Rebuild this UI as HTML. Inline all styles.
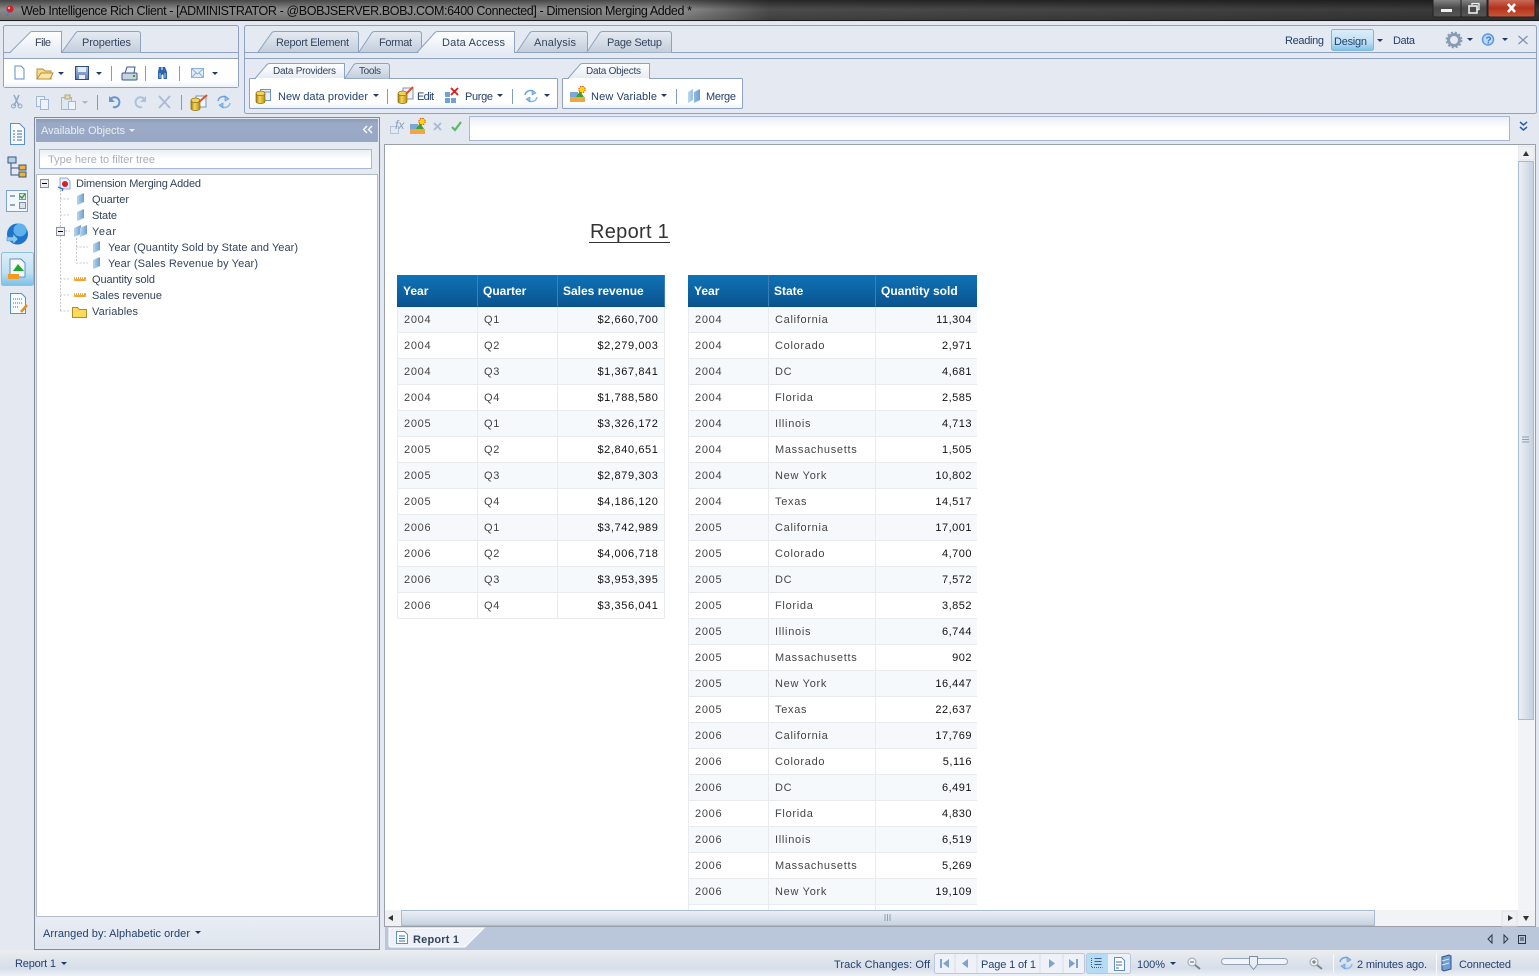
<!DOCTYPE html>
<html><head><meta charset="utf-8"><title>Web Intelligence Rich Client</title>
<style>
html,body{margin:0;padding:0;width:1539px;height:976px;overflow:hidden;background:#e3e8f1;font-family:"Liberation Sans",sans-serif}
svg{position:absolute;left:0;top:0}
svg text{font-family:"Liberation Sans",sans-serif;font-size:11px;fill:#24406e}
.tb{fill:#33445c!important}.sm{font-size:10px!important}
#w{position:absolute;left:385px;top:145px;width:1133px;height:765px;overflow:hidden;background:#fff}
#ttl{position:absolute;left:204px;top:78px;font-size:20px;line-height:19px;letter-spacing:.3px;color:#333;border-bottom:1px solid #333;padding:0 1px;white-space:nowrap}
table{position:absolute;top:130px;border-collapse:separate;border-spacing:0;table-layout:fixed;font-size:11px;color:#444}
th{height:32px;box-sizing:border-box;padding:0 0 0 5px;text-align:left;color:#fff;font-size:12px;background:linear-gradient(#0f72b7,#0a5590);border-right:1px solid #3a7fb5;border-bottom:1px solid #0a4d84;font-weight:bold}
th:first-child{padding-left:6px}
td{height:26px;box-sizing:border-box;padding:0 0 0 6px;border-right:1px solid #e9ecef;border-bottom:1px solid #e9ecef;letter-spacing:.7px;white-space:nowrap}
td:first-child{border-left:1px solid #e9ecef;padding-left:6px}
tr:nth-child(even) td{background:#f6f9fb}
td.r{text-align:right;padding:0 5.5px 0 0;color:#111}
#a td.r{letter-spacing:.6px}#b td.r{letter-spacing:.5px;border-right:0;padding-right:5px}#b th:last-child{border-right:0}
</style></head><body>
<svg width="1539" height="976" viewBox="0 0 1539 976">
<defs>
<linearGradient id="tbar" x1="0" x2="1" y1="0" y2="0"><stop offset="0" stop-color="#8a8a8a"/><stop offset=".44" stop-color="#8e8e8e"/><stop offset=".5" stop-color="#4c4c4c"/><stop offset="1" stop-color="#383838"/></linearGradient>
<linearGradient id="tv" x1="0" x2="0" y1="0" y2="1"><stop offset="0" stop-color="#000" stop-opacity=".5"/><stop offset=".45" stop-color="#000" stop-opacity="0"/><stop offset="1" stop-color="#000" stop-opacity=".2"/></linearGradient>
<linearGradient id="act" x1="0" x2="0" y1="0" y2="1"><stop offset="0" stop-color="#fff"/><stop offset="1" stop-color="#e6ecf4"/></linearGradient>
<linearGradient id="ina" x1="0" x2="0" y1="0" y2="1"><stop offset="0" stop-color="#e6ebf2"/><stop offset="1" stop-color="#c3cedc"/></linearGradient>
<linearGradient id="wh" x1="0" x2="0" y1="0" y2="1"><stop offset="0" stop-color="#fff"/><stop offset=".8" stop-color="#fff"/><stop offset="1" stop-color="#edf1f7"/></linearGradient>
<linearGradient id="sel" x1="0" x2="0" y1="0" y2="1"><stop offset="0" stop-color="#dceefa"/><stop offset=".6" stop-color="#bfe0f3"/><stop offset="1" stop-color="#7cc0e6"/></linearGradient>
<linearGradient id="hd" x1="0" x2="0" y1="0" y2="1"><stop offset="0" stop-color="#8a9ab8"/><stop offset=".2" stop-color="#9aaac6"/><stop offset="1" stop-color="#98a8c4"/></linearGradient>
<linearGradient id="inp" x1="0" x2="0" y1="0" y2="1"><stop offset="0" stop-color="#e8edf4"/><stop offset=".5" stop-color="#fff"/></linearGradient>
<linearGradient id="st" x1="0" x2="0" y1="0" y2="1"><stop offset="0" stop-color="#ebedf0"/><stop offset=".7" stop-color="#d6dee9"/><stop offset="1" stop-color="#eef1f6"/></linearGradient>
<linearGradient id="ft" x1="0" x2="0" y1="0" y2="1"><stop offset="0" stop-color="#e9edf4"/><stop offset="1" stop-color="#dfe5ef"/></linearGradient>
<linearGradient id="hs" x1="0" x2="0" y1="0" y2="1"><stop offset="0" stop-color="#eef1f6"/><stop offset="1" stop-color="#c4d0e0"/></linearGradient>
<linearGradient id="vs" x1="0" x2="1" y1="0" y2="0"><stop offset="0" stop-color="#eef1f6"/><stop offset="1" stop-color="#c4d0e0"/></linearGradient>
<linearGradient id="cl" x1="0" x2="0" y1="0" y2="1"><stop offset="0" stop-color="#c9705e"/><stop offset=".5" stop-color="#b5321c"/><stop offset="1" stop-color="#c85a3a"/></linearGradient>
<linearGradient id="gb" x1="0" x2="0" y1="0" y2="1"><stop offset="0" stop-color="#8a8a8a"/><stop offset=".5" stop-color="#4a4a4a"/><stop offset="1" stop-color="#555"/></linearGradient>
<linearGradient id="cyl" x1="0" x2="1" y1="0" y2="0"><stop offset="0" stop-color="#a07a10"/><stop offset=".4" stop-color="#f5d75a"/><stop offset="1" stop-color="#b88d14"/></linearGradient>
<linearGradient id="obj" x1="0" x2="1" y1="0" y2="0"><stop offset="0" stop-color="#bcd6ee"/><stop offset="1" stop-color="#6a9fd2"/></linearGradient>
<linearGradient id="sv" x1="0" x2="0" y1="0" y2="1"><stop offset="0" stop-color="#a9bfe0"/><stop offset="1" stop-color="#5f7fb5"/></linearGradient>
<g id="dr"><path d="M0 0h6l-3 3z" fill="#1f3a66"/></g>
<g id="ob"><path d="M0 3l7-3v9l-7 3z" fill="url(#obj)"/></g>
<g id="ms"><rect y="1" width="12" height="4" fill="#f3a73c"/><path d="M1.500 1v2M3.500 1v2M5.500 1v2M7.500 1v2M9.500 1v2" stroke="#fff" stroke-width="1"/></g>
<g id="cy"><ellipse cx="4.500" cy="2.500" rx="4.500" ry="2.500" fill="#f2d257" stroke="#8d6c10" stroke-width=".7"/><path d="M0 2.500v8c0 2.800 9 2.800 9 0v-8c0 2.800-9 2.800-9 0z" fill="url(#cyl)" stroke="#8d6c10" stroke-width=".7"/></g>
<g id="rf" fill="none" stroke-width="1.500"><path d="M1 6a5.500 5.500 0 0 1 10-2" stroke="#6ba3dc"/><path d="M8 1l4 3-4 2z" fill="#8fbde9" stroke="#5d98d6" stroke-width=".6"/><path d="M13 8a5.500 5.500 0 0 1-10 2" stroke="#8cbae8"/><path d="M6 13l-4-3 4-2z" fill="#8fbde9" stroke="#5d98d6" stroke-width=".6"/></g>
<g id="nv"><rect x="0" y="6" width="8" height="5" fill="#7ba6d8"/><rect x="0" y="11" width="15" height="5" fill="#f0a546"/><path d="M6 11l4-6 4 6z" fill="#2fa62f"/><circle cx="12" cy="3.500" r="3.200" fill="#ffd800" stroke="#e23a1a" stroke-width=".9" stroke-dasharray="1.500 1"/></g>
</defs>

<!-- title bar -->
<rect width="1539" height="21" fill="url(#tbar)"/><rect width="1539" height="21" fill="url(#tv)"/>
<rect y="20" width="1539" height="1" fill="#1a1a1a"/><rect y="21" width="1539" height="1" fill="#dfe3ea"/>
<circle cx="10" cy="9" r="3.600" fill="#d8202a"/><circle cx="9" cy="8" r="1.200" fill="#ffb0b0"/><path d="M9 12l-2 4" stroke="#4a78c8" stroke-width="1.600"/>
<text x="21" y="15" style="font-size:12.500px;fill:#0a0a0a" textLength="671" lengthAdjust="spacing">Web Intelligence Rich Client - [ADMINISTRATOR - @BOBJSERVER.BOBJ.COM:6400 Connected]  - Dimension Merging Added *</text>
<rect x="1433" y="-1" width="28" height="18" rx="2" fill="url(#gb)" stroke="#222"/><rect x="1441" y="9" width="11" height="3" fill="#eee"/>
<rect x="1461" y="-1" width="26" height="18" rx="1" fill="url(#gb)" stroke="#222"/><rect x="1469" y="6" width="8" height="7" fill="none" stroke="#eee" stroke-width="1.600"/><path d="M1472 5V3.500h7v6h-2" fill="none" stroke="#eee" stroke-width="1.300"/>
<rect x="1488" y="-1" width="47" height="18" rx="2" fill="url(#cl)" stroke="#222"/><path d="M1508 4l7 8M1515 4l-7 8" stroke="#fff" stroke-width="2.600"/>

<!-- file panel -->
<rect x="3.500" y="25.500" width="235" height="62" rx="2" fill="#e5e9f2" stroke="#8fa3c0"/>
<rect x="4" y="58" width="234" height="29" fill="url(#wh)"/>
<path d="M4 52.500H238M4 58.500H238" stroke="#8fa3c0"/>
<path d="M10 52.500L30 32.500Q30.500 31.500 32 31.500H61.500V52.500" fill="url(#act)" stroke="#8fa3c0"/><rect x="11" y="52" width="50" height="2" fill="#e6ecf4"/>
<path d="M62 52L76 32.500Q77 31.500 78 31.500H138Q140.500 31.500 140.500 34V52.500" fill="url(#ina)" stroke="#8fa3c0"/>
<text x="35" y="46" class="tb" textLength="16">File</text>
<text x="82" y="46" class="tb" textLength="49">Properties</text>

<!-- ribbon -->
<rect x="244.500" y="25.500" width="1292" height="88" rx="2" fill="#e5e9f2" stroke="#8fa3c0"/>
<path d="M245 52.500H1536M245 58.500H1536" stroke="#8fa3c0"/>
<path d="M258 52L272 32.500Q273 31.500 275 31.500H356Q358.500 31.500 358.500 34V52" fill="url(#ina)" stroke="#8fa3c0"/>
<path d="M359 52L372 32.500Q373 31.500 375 31.500H419Q421.500 31.500 421.500 34V52" fill="url(#ina)" stroke="#8fa3c0"/>
<path d="M517 52L530 32.500Q531 31.500 533 31.500H585Q587.500 31.500 587.500 34V52" fill="url(#ina)" stroke="#8fa3c0"/>
<path d="M587 52L600 32.500Q601 31.500 603 31.500H669Q671.500 31.500 671.500 34V52.500" fill="url(#ina)" stroke="#8fa3c0"/>
<path d="M417 52.500L435 32.500Q436 31.500 438 31.500H514.500V52.500" fill="url(#act)" stroke="#8fa3c0"/><rect x="419" y="52" width="95" height="2" fill="#e6ecf4"/>
<text x="276" y="46" class="tb" textLength="73">Report Element</text>
<text x="379" y="46" class="tb" textLength="33">Format</text>
<text x="442" y="46" class="tb" textLength="63">Data Access</text>
<text x="534" y="46" class="tb" textLength="42">Analysis</text>
<text x="607" y="46" class="tb" textLength="55">Page Setup</text>
<!-- ribbon subpanels -->
<rect x="249.500" y="78.500" width="308" height="30" rx="1" fill="url(#wh)" stroke="#8fa3c0"/>
<rect x="562.500" y="78.500" width="180" height="30" rx="1" fill="url(#wh)" stroke="#8fa3c0"/>
<path d="M345 78L354 64.500Q355 63.500 357 63.500H387Q389.500 63.500 389.500 66V78.500" fill="url(#ina)" stroke="#8fa3c0"/>
<path d="M255 78.500L267 64.500Q268 63.500 270 63.500H344.500V78.500" fill="url(#act)" stroke="#8fa3c0"/><rect x="256" y="78" width="88" height="2" fill="#fff"/>
<path d="M568 78.500L580 64.500Q581 63.500 583 63.500H649.500V78.500" fill="url(#act)" stroke="#8fa3c0"/><rect x="569" y="78" width="80" height="2" fill="#fff"/>
<text x="273" y="74" class="tb sm" textLength="63">Data Providers</text>
<text x="359" y="74" class="tb sm" textLength="22">Tools</text>
<text x="586" y="74" class="tb sm" textLength="55">Data Objects</text>
<!-- ribbon items -->
<rect x="260.500" y="89.500" width="10" height="11" fill="#e8f0fa" stroke="#6f95c7"/><path d="M261 92h9" stroke="#6f95c7"/><use href="#cy" x="256" y="91"/>
<text x="278" y="100" textLength="90">New data provider</text><use href="#dr" x="373" y="94"/>
<rect x="387" y="89" width="1" height="15" fill="#7f9cc6"/>
<rect x="403" y="88" width="10" height="11" fill="#f2f6fb" stroke="#7c93b5"/><use href="#cy" x="398" y="91"/><path d="M406 94l7-7" stroke="#d8532a" stroke-width="2"/>
<text x="417" y="100" textLength="17">Edit</text>
<path d="M445 92h5v5h-5zM445 98h5v5h-5zM451 98h5v5h-5z" fill="#6fa3d8"/><path d="M451 88l7 7M458 88l-7 7" stroke="#e01a1a" stroke-width="1.800"/>
<text x="465" y="100" textLength="28">Purge</text><use href="#dr" x="497" y="94"/>
<rect x="512" y="89" width="1" height="15" fill="#7f9cc6"/>
<use href="#rf" x="524" y="89"/><use href="#dr" x="544" y="94"/>
<use href="#nv" x="570" y="86"/>
<text x="591" y="100" textLength="66">New Variable</text><use href="#dr" x="661" y="94"/>
<rect x="676" y="89" width="1" height="15" fill="#7f9cc6"/>
<path d="M688 92l5-3v11l-5 3zM694 92l6-3v11l-6 3z" fill="url(#obj)"/>
<text x="706" y="100" textLength="30">Merge</text>
<!-- right ribbon -->
<text x="1285" y="44" textLength="39">Reading</text>
<rect x="1331.500" y="29.500" width="42" height="21" rx="2" fill="url(#sel)" stroke="#7fb6dc"/>
<text x="1334" y="45" textLength="33">Design</text><use href="#dr" x="1377" y="39"/>
<text x="1393" y="44" textLength="22">Data</text>
<circle cx="1454" cy="40" r="5.500" fill="none" stroke="#8a9bb3" stroke-width="3"/><circle cx="1454" cy="40" r="7.500" fill="none" stroke="#8a9bb3" stroke-width="1.800" stroke-dasharray="2 2"/>
<use href="#dr" x="1467" y="38"/>
<circle cx="1488" cy="39.500" r="5.500" fill="#bcd8f6" stroke="#5f98e0" stroke-width="1.500"/><text x="1485.500" y="43.500" style="font-size:10px;font-weight:bold;fill:#3a78cf">?</text>
<use href="#dr" x="1502" y="38"/>
<path d="M1518.500 36l4.500 4-4.500 4M1527.500 36l-4.500 4 4.500 4" fill="none" stroke="#8593a8" stroke-width="1.300"/>

<!-- quick toolbars -->
<path d="M15 66h6l3 3v10h-9z" fill="#fff" stroke="#5f8fc9"/>
<path d="M37 69h6l2 2h6v8H37z" fill="#f5d98c" stroke="#b78e3a"/><path d="M37 79l4-6h12l-3 6z" fill="#fbe7a8" stroke="#b78e3a"/>
<use href="#dr" x="58" y="72"/>
<rect x="75.500" y="66.500" width="13" height="13" fill="url(#sv)" stroke="#2f4a80"/><rect x="78" y="67" width="8" height="5" fill="#e4ecf7"/><rect x="79" y="75" width="6" height="4" fill="#e8edf4"/>
<use href="#dr" x="96" y="72"/>
<rect x="111" y="66" width="1" height="15" fill="#7f9cc6"/>
<rect x="122" y="73" width="15" height="7" rx="1" fill="#c8d3e2" stroke="#3d5a86"/><path d="M125 73l2-6h8l-1 6z" fill="#f2f5fa" stroke="#3d5a86"/><rect x="133" y="75" width="2" height="2" fill="#2fa62f"/>
<rect x="145" y="66" width="1" height="15" fill="#7f9cc6"/>
<path d="M159 67h2.500v3l1 0v-3H165v0l2 5v7h-3.500v-4h-.5v-.5h-1v.5h-.5v4H158v-7z" fill="#2e63ad"/><path d="M160 73v5M165 73v5" stroke="#a9c8ec"/>
<rect x="179" y="66" width="1" height="15" fill="#7f9cc6"/>
<rect x="191.500" y="68.500" width="12" height="9" fill="#e3edf9" stroke="#8ab0de"/><path d="M192 69l5.500 5 5.500-5M192 77l4-4M203 77l-4-4" fill="none" stroke="#8ab0de"/>
<use href="#dr" x="212" y="72"/>
<!-- tools row -->
<path d="M19 95l-5 11M14 95l5 11" stroke="#8fa7c6" stroke-width="1.500"/><circle cx="13.500" cy="106" r="2" fill="none" stroke="#8fa7c6"/><circle cx="20" cy="106" r="2" fill="none" stroke="#8fa7c6"/>
<rect x="36.500" y="96.500" width="8" height="10" fill="#eef3f9" stroke="#a3b8d4"/><rect x="40.500" y="99.500" width="8" height="10" fill="#eef3f9" stroke="#a3b8d4"/>
<rect x="61.500" y="97.500" width="10" height="12" fill="#dfe7f2" stroke="#a3b8d4"/><rect x="65" y="95" width="5" height="4" fill="#e7d9a8" stroke="#b5a779"/><rect x="68.500" y="101.500" width="7" height="8" fill="#eef3f9" stroke="#a3b8d4"/>
<path d="M82 101h6l-3 3z" fill="#a8b6c9"/>
<rect x="97" y="95" width="1" height="15" fill="#7f9cc6"/>
<path d="M110 100a5 5 0 1 1 3 7" fill="none" stroke="#6a96cc" stroke-width="2"/><path d="M109 96v6h6z" fill="#6a96cc"/>
<path d="M145 100a5 5 0 1 0-3 7" fill="none" stroke="#aac2de" stroke-width="2"/><path d="M146 96v6h-6z" fill="#aac2de"/>
<path d="M159 96l11 12M170 96l-11 12" stroke="#a8bcd5" stroke-width="1.800"/>
<rect x="181" y="95" width="1" height="15" fill="#7f9cc6"/>
<rect x="196" y="96" width="10" height="11" fill="#f2f6fb" stroke="#7c93b5"/><use href="#cy" x="191" y="98"/><path d="M199 102l8-7" stroke="#d8532a" stroke-width="2"/>
<use href="#rf" x="217" y="95"/>

<!-- left rail -->
<path d="M10.500 123.500h9l5 5v16h-14z" fill="#f7fafd" stroke="#5d8fca"/><path d="M13 131h2M17 131h5M13 134h2M17 134h5M13 137h2M17 137h5M13 140h2M17 140h5" stroke="#496f9e"/>
<rect x="8" y="157" width="8" height="6" fill="#b9d0ea" stroke="#37557e"/><rect x="19" y="165" width="7" height="5" fill="#f0b030" stroke="#37557e"/><rect x="19" y="172" width="7" height="5" fill="#f0b030" stroke="#37557e"/><path d="M11 163v12h8M11 168h8" fill="none" stroke="#37557e"/>
<rect x="6.500" y="190.500" width="21" height="21" fill="#f2f7fc" stroke="#7ba3d2"/><path d="M10 196h5M10 205h5" stroke="#37557e"/><rect x="19.500" y="193.500" width="6" height="6" fill="#d8e2ee" stroke="#7a90ac"/><path d="M20 196l2 2 3-4" stroke="#2e9b2e" stroke-width="1.300" fill="none"/><rect x="19.500" y="202.500" width="6" height="6" fill="#d8e2ee" stroke="#7a90ac"/>
<circle cx="17.500" cy="234" r="10.500" fill="#1f73c9"/><circle cx="20" cy="230" r="6.500" fill="#5fb2ec"/><path d="M7 237h6v-3l5 5-5 5v-3H7z" fill="#8cc7ec" stroke="#2e86cf" stroke-width=".5"/>
<rect x="1.500" y="252.500" width="32" height="33" rx="2" fill="url(#sel)" stroke="#8dbfe0"/>
<path d="M10 259h11l4 4v14H10z" fill="#f7fafd" stroke="#5d8fca"/><path d="M13 271l5-7 6 7z" fill="#1fa82f"/><rect x="8" y="274" width="11" height="5" fill="#f39a1f"/>
<path d="M10.500 293.500h11l4 4v16h-15z" fill="#f7fafd" stroke="#5d8fca"/><path d="M13 299h9M13 303h9M13 307h6" stroke="#496f9e" stroke-dasharray="1 1"/><path d="M21 312l6-7" stroke="#e09020" stroke-width="2.500"/>

<!-- left panel -->
<rect x="34.500" y="117.500" width="345" height="832" fill="#e3e8f1" stroke="#7f8a9b"/>
<rect x="36" y="119" width="342" height="23" fill="url(#hd)"/>
<rect x="36" y="142" width="342" height="33" fill="#e6ebf3"/>
<rect x="39.500" y="149.500" width="332" height="19" fill="url(#inp)" stroke="#a6b9d3"/>
<rect x="36.500" y="174.500" width="341" height="742" fill="#fff" stroke="#b5bcc7"/>
<rect x="36" y="917" width="342" height="31" fill="url(#ft)"/>
<text x="41" y="134" style="fill:#e9eef6" textLength="84">Available Objects</text><path d="M129 129h6l-3 3z" fill="#e9eef6"/>
<path d="M367 126l-3.500 3.500 3.500 3.500M372 126l-3.500 3.500 3.500 3.500" fill="none" stroke="#fff" stroke-width="1.300"/>
<text x="48" y="163" style="fill:#a6afbd" textLength="107">Type here to filter tree</text>
<!-- tree -->
<path d="M60.500 190V311M60 199h10M60 215h10M65 231h5M60 279h10M60 295h10M60 311h10M76.500 238V263M76 247h12M76 263h12" fill="none" stroke="#c4c8ce" stroke-dasharray="2 1.500"/>
<rect x="40.500" y="179.500" width="8" height="8" fill="#eef0f3" stroke="#8b8f96"/><path d="M42 183.500h5" stroke="#000"/>
<rect x="56.500" y="227.500" width="8" height="8" fill="#eef0f3" stroke="#8b8f96"/><path d="M58 231.500h5" stroke="#000"/>
<path d="M60 178h7l3 3v8H60z" fill="#eaf1fa" stroke="#6f95c7" stroke-width=".8"/><circle cx="65" cy="184" r="3" fill="#d81e28"/><path d="M58 187l5 2-1 2" fill="none" stroke="#3467bf" stroke-width="1.200"/>
<use href="#ob" x="77" y="193"/><use href="#ob" x="77" y="209"/>
<use href="#ob" x="74" y="225"/><use href="#ob" x="80" y="225"/>
<use href="#ob" x="93" y="241"/><use href="#ob" x="93" y="257"/>
<use href="#ms" x="74" y="276"/><use href="#ms" x="74" y="292"/>
<path d="M72.500 307.500h5l2 2h7v8h-14z" fill="#ffd95a" stroke="#b08a30"/>
<text x="76" y="187" class="tb" textLength="125">Dimension Merging Added</text>
<text x="92" y="203" class="tb" textLength="37">Quarter</text>
<text x="92" y="219" class="tb" textLength="25">State</text>
<text x="92" y="235" class="tb" textLength="24">Year</text>
<text x="108" y="251" class="tb" textLength="190">Year (Quantity Sold by State and Year)</text>
<text x="108" y="267" class="tb" textLength="150">Year (Sales Revenue by Year)</text>
<text x="92" y="283" class="tb" textLength="63">Quantity sold</text>
<text x="92" y="299" class="tb" textLength="70">Sales revenue</text>
<text x="92" y="315" class="tb" textLength="46">Variables</text>
<text x="43" y="937" textLength="147">Arranged by: Alphabetic order</text><use href="#dr" x="195" y="931"/>

<!-- formula bar -->
<rect x="390.500" y="126.500" width="8" height="7" fill="none" stroke="#b4c3d8"/><text x="395" y="129" style="font-size:12px;font-style:italic;fill:#8ba0bd">fx</text>
<use href="#nv" x="410" y="118"/>
<path d="M434 123l7 7M441 123l-7 7" stroke="#a8bad1" stroke-width="1.800"/>
<path d="M452 127l3 3 6-8" fill="none" stroke="#5fb56b" stroke-width="2.200"/>
<rect x="469.500" y="116.500" width="1040" height="24" fill="url(#inp)" stroke="#a6b9d3"/>
<path d="M1520 122l3.500 3 3.500-3M1520 127l3.500 3 3.500-3" fill="none" stroke="#2a5fa8" stroke-width="1.500"/>

<!-- report frame -->
<rect x="384.500" y="144.500" width="1151" height="782" fill="#fff" stroke="#9a9fa8"/>
<rect x="1518" y="146" width="17" height="780" fill="#f1f3f6"/>
<rect x="1518" y="146" width="16" height="14" fill="#eef0f4" stroke="#dfe3e9"/><path d="M1523 156l3-5 3 5z" fill="#333"/>
<rect x="1518.500" y="161.500" width="15" height="558" fill="url(#vs)" stroke="#a9bbd4"/>
<path d="M1522 437h7M1522 439.500h7M1522 442h7" stroke="#8ba0bb"/>
<rect x="1518" y="911" width="17" height="15" fill="#eef0f4"/><path d="M1523 916h6l-3 5z" fill="#333"/>
<rect x="385" y="910" width="1133" height="16" fill="#f1f3f6"/>
<rect x="385" y="911" width="15" height="15" fill="#eef0f4"/><path d="M393 915v6l-5-3z" fill="#333"/>
<rect x="401.500" y="910.500" width="973" height="15" fill="url(#hs)" stroke="#a9bbd4"/>
<path d="M885 914v7M887.500 914v7M890 914v7" stroke="#8ba0bb"/>
<rect x="1502" y="911" width="15" height="15" fill="#eef0f4" stroke="#dfe3e9"/><path d="M1508 915v6l5-3z" fill="#333"/>
<!-- watermark nav -->
<g opacity=".55"><path d="M1476 856l6-7 6 7z" fill="#e5eef8"/><path d="M1476 892h13l-6.500 7z" fill="#cfe3f6"/><path d="M1465 867v12l-6-6z" fill="#dceaf7"/><path d="M1501 867v13l7-6.500z" fill="#bcd6f1"/><path d="M1474.500 863.500h13l4 4v16h-17z" fill="#f2f7fc" stroke="#cfe0f1"/><text x="1480" y="878" style="fill:#d0e0f0">1</text></g>

<!-- tab bar -->
<rect x="385" y="927" width="1154" height="23" fill="#bac6d9"/>
<rect x="0" y="950" width="1539" height="26" fill="url(#st)"/>
<path d="M389 928v17q0 2 2 2h74l19-19z" fill="#eef2f8" stroke="#fff"/>
<path d="M396.500 931.500h8l3 3v9h-11z" fill="#fff" stroke="#5d8fca"/><path d="M399 936h6M399 938.500h6M399 941h6" stroke="#496f9e"/>
<text x="413" y="943" style="font-weight:bold;fill:#33445c" textLength="46">Report 1</text>
<path d="M1492 935l-4 4 4 4z" fill="none" stroke="#29364a"/><path d="M1504 935l4 4-4 4z" fill="none" stroke="#29364a"/>
<rect x="1518.500" y="935.500" width="7" height="8" fill="none" stroke="#29364a"/><path d="M1520 938h4M1520 940h4" stroke="#29364a"/>

<!-- status bar -->
<text x="15" y="967" textLength="41">Report 1</text><use href="#dr" x="61" y="962"/>
<text x="834" y="968" textLength="96">Track Changes: Off</text>
<rect x="934.500" y="953.500" width="150" height="20" rx="2" fill="#eef2f8" stroke="#b9c8dc"/>
<path d="M955 954v19M977 954v19M1040 954v19M1063 954v19" stroke="#d5dde8"/>
<path d="M941 959v9" stroke="#7fa2cd" stroke-width="2"/><path d="M949 959v9l-6-4.500zM968 959v9l-6-4.500z" fill="#7fa2cd"/>
<path d="M1049 959v9l6-4.500zM1069 959v9l6-4.500z" fill="#7fa2cd"/><path d="M1077 959v9" stroke="#7fa2cd" stroke-width="2"/>
<text x="981" y="968" textLength="55">Page 1 of 1</text>
<rect x="1086.500" y="953.500" width="44" height="20" rx="2" fill="#eef2f8" stroke="#b9c8dc"/><rect x="1087" y="954" width="21" height="19" fill="#b5dcf3"/>
<path d="M1094.500 958.500h7M1094.500 961.500h7M1094.500 964.500h7" stroke="#3a5f95"/><path d="M1091.500 958v9.500h11" fill="none" stroke="#3a5f95" stroke-dasharray="1 1"/>
<path d="M1114.500 957.500h7l3 3v10h-10z" fill="#fff" stroke="#5d8fca"/><path d="M1116 962h6M1116 965h6M1116 968h3" stroke="#496f9e"/>
<text x="1137" y="968" textLength="28">100%</text><use href="#dr" x="1170" y="962"/>
<circle cx="1192" cy="962" r="4" fill="#eef2f7" stroke="#9aa5b5"/><path d="M1195 965l5 4" stroke="#7b8594" stroke-width="2"/><path d="M1190 962h4" stroke="#666"/>
<rect x="1221.500" y="958.500" width="66" height="6" rx="3" fill="#f1f5fa" stroke="#94a3b8"/>
<path d="M1249.500 956.500h8v8l-4 5-4-5z" fill="#e8eef5" stroke="#7d8ea6"/>
<circle cx="1314" cy="962" r="4" fill="#eef2f7" stroke="#9aa5b5"/><path d="M1317 965l5 4" stroke="#7b8594" stroke-width="2"/><path d="M1312 962h4M1314 960v4" stroke="#666"/>
<rect x="1333" y="954" width="1" height="19" fill="#f7f9fb"/>
<use href="#rf" x="1339" y="956"/>
<text x="1357" y="968" textLength="70">2 minutes ago.</text>
<rect x="1436" y="953" width="1" height="22" fill="#f7f9fb"/>
<path d="M1442 957l7-2 2 1v13l-7 2-2-1z" fill="#6f9fd6" stroke="#33528a"/><path d="M1442 961l7-2M1442 965l7-2" stroke="#dbe8f7"/>
<text x="1459" y="968" textLength="52">Connected</text>
</svg>

<div id="w">
<div id="ttl">Report 1</div>
<table id="a" style="left:12px;width:268px">
<colgroup><col style="width:81px"><col style="width:80px"><col style="width:107px"></colgroup>
<tr><th>Year</th><th>Quarter</th><th>Sales revenue</th></tr>
<tr><td>2004</td><td>Q1</td><td class="r">$2,660,700</td></tr>
<tr><td>2004</td><td>Q2</td><td class="r">$2,279,003</td></tr>
<tr><td>2004</td><td>Q3</td><td class="r">$1,367,841</td></tr>
<tr><td>2004</td><td>Q4</td><td class="r">$1,788,580</td></tr>
<tr><td>2005</td><td>Q1</td><td class="r">$3,326,172</td></tr>
<tr><td>2005</td><td>Q2</td><td class="r">$2,840,651</td></tr>
<tr><td>2005</td><td>Q3</td><td class="r">$2,879,303</td></tr>
<tr><td>2005</td><td>Q4</td><td class="r">$4,186,120</td></tr>
<tr><td>2006</td><td>Q1</td><td class="r">$3,742,989</td></tr>
<tr><td>2006</td><td>Q2</td><td class="r">$4,006,718</td></tr>
<tr><td>2006</td><td>Q3</td><td class="r">$3,953,395</td></tr>
<tr><td>2006</td><td>Q4</td><td class="r">$3,356,041</td></tr>
</table>
<table id="b" style="left:303px;width:289px">
<colgroup><col style="width:81px"><col style="width:107px"><col style="width:101px"></colgroup>
<tr><th>Year</th><th>State</th><th>Quantity sold</th></tr>
<tr><td>2004</td><td>California</td><td class="r">11,304</td></tr>
<tr><td>2004</td><td>Colorado</td><td class="r">2,971</td></tr>
<tr><td>2004</td><td>DC</td><td class="r">4,681</td></tr>
<tr><td>2004</td><td>Florida</td><td class="r">2,585</td></tr>
<tr><td>2004</td><td>Illinois</td><td class="r">4,713</td></tr>
<tr><td>2004</td><td>Massachusetts</td><td class="r">1,505</td></tr>
<tr><td>2004</td><td>New York</td><td class="r">10,802</td></tr>
<tr><td>2004</td><td>Texas</td><td class="r">14,517</td></tr>
<tr><td>2005</td><td>California</td><td class="r">17,001</td></tr>
<tr><td>2005</td><td>Colorado</td><td class="r">4,700</td></tr>
<tr><td>2005</td><td>DC</td><td class="r">7,572</td></tr>
<tr><td>2005</td><td>Florida</td><td class="r">3,852</td></tr>
<tr><td>2005</td><td>Illinois</td><td class="r">6,744</td></tr>
<tr><td>2005</td><td>Massachusetts</td><td class="r">902</td></tr>
<tr><td>2005</td><td>New York</td><td class="r">16,447</td></tr>
<tr><td>2005</td><td>Texas</td><td class="r">22,637</td></tr>
<tr><td>2006</td><td>California</td><td class="r">17,769</td></tr>
<tr><td>2006</td><td>Colorado</td><td class="r">5,116</td></tr>
<tr><td>2006</td><td>DC</td><td class="r">6,491</td></tr>
<tr><td>2006</td><td>Florida</td><td class="r">4,830</td></tr>
<tr><td>2006</td><td>Illinois</td><td class="r">6,519</td></tr>
<tr><td>2006</td><td>Massachusetts</td><td class="r">5,269</td></tr>
<tr><td>2006</td><td>New York</td><td class="r">19,109</td></tr>
<tr><td></td><td></td><td class="r"></td></tr>
</table>
</div>
</body></html>
